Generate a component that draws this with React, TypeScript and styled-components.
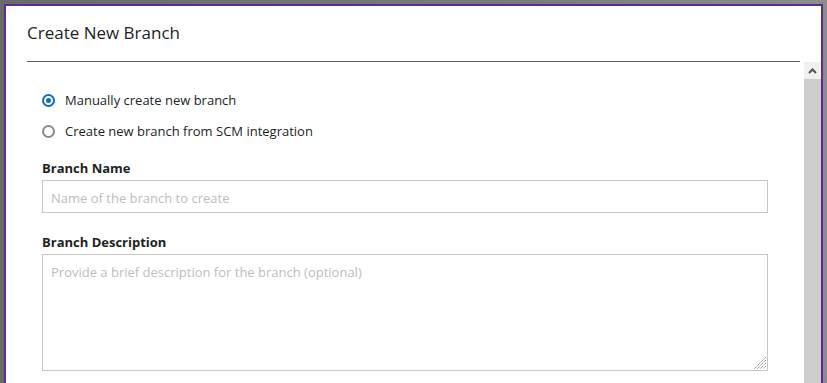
import React from "react";
import styled, { createGlobalStyle } from "styled-components";

const GlobalStyle = createGlobalStyle`
  html, body {
    margin: 0;
    padding: 0;
    height: 100%;
    overflow: hidden;
    background: #6f6f6f;
  }
  body {
    font-family: "Segoe UI", "Open Sans", "Liberation Sans", sans-serif;
  }
  * {
    box-sizing: border-box;
  }
`;

const Backdrop = styled.div`
  height: 383px;
  padding: 4px 4px 0 4px;
  background: linear-gradient(90deg, #6a6a6a 0%, #7a7a7a 60%, #8c8c8c 100%);
`;

const Dialog = styled.div`
  display: flex;
  flex-direction: column;
  height: 100%;
  background: #ffffff;
  border: 2px solid #5c2d91;
  border-bottom: none;
`;

const Header = styled.div`
  display: flex;
  align-items: center;
  height: 56px;
  margin: 0 21px;
  border-bottom: 1px solid #605e5c;
`;

const Title = styled.h1`
  margin: 0 0 2px 0;
  font-size: 17px;
  font-weight: 400;
  color: #201f1e;
`;

const Body = styled.div`
  display: flex;
  flex: 1;
  min-height: 0;
`;

const Content = styled.div`
  flex: 1;
  padding: 28px 36px 0 36px;
`;

const RadioGroup = styled.div`
  display: flex;
  flex-direction: column;
  gap: 11px;
  margin-bottom: 17px;
`;

const RadioRow = styled.label`
  display: flex;
  align-items: center;
  gap: 10px;
  height: 20px;
  font-size: 13px;
  color: #201f1e;
  cursor: pointer;
`;

const Radio = styled.span<{ $checked?: boolean }>`
  position: relative;
  width: 13px;
  height: 13px;
  border-radius: 50%;
  border: 2px solid ${(p) => (p.$checked ? "#0f6cbd" : "#8a8886")};
  flex-shrink: 0;

  &::after {
    content: "";
    display: ${(p) => (p.$checked ? "block" : "none")};
    position: absolute;
    top: 2px;
    left: 2px;
    width: 5px;
    height: 5px;
    border-radius: 50%;
    background: #0f6cbd;
  }
`;

const Field = styled.div`
  display: flex;
  flex-direction: column;
  gap: 2px;
  margin-bottom: 19px;
`;

const FieldLabel = styled.label`
  height: 20px;
  line-height: 20px;
  font-size: 13px;
  font-weight: 700;
  color: #201f1e;
`;

const TextInput = styled.input`
  height: 33px;
  padding: 2px 8px 0 8px;
  border: 1px solid #c8c6c4;
  font-family: inherit;
  font-size: 13px;
  color: #201f1e;
  outline: none;

  &::placeholder {
    color: #bebdbc;
  }
`;

const TextAreaWrap = styled.div`
  position: relative;
  display: flex;
`;

const TextArea = styled.textarea`
  flex: 1;
  height: 117px;
  padding: 8px 8px;
  border: 1px solid #c8c6c4;
  font-family: inherit;
  font-size: 13px;
  color: #201f1e;
  resize: none;
  outline: none;

  &::placeholder {
    color: #bebdbc;
  }
`;

const ResizeGrip = styled.svg`
  position: absolute;
  right: 2px;
  bottom: 2px;
  pointer-events: none;
`;

const Scrollbar = styled.div`
  display: flex;
  flex-direction: column;
  width: 17px;
  background: #f0f0f0;
`;

const ScrollButton = styled.div`
  display: flex;
  align-items: center;
  justify-content: center;
  height: 17px;
  background: #f0f0f0;
`;

const ScrollThumb = styled.div`
  flex: 1;
  background: #cdcdcd;
`;

const App = () => {
  return (
    <>
      <GlobalStyle />
      <Backdrop>
        <Dialog>
          <Header>
            <Title>Create New Branch</Title>
          </Header>
          <Body>
            <Content>
              <RadioGroup>
                <RadioRow>
                  <Radio $checked />
                  Manually create new branch
                </RadioRow>
                <RadioRow>
                  <Radio />
                  Create new branch from SCM integration
                </RadioRow>
              </RadioGroup>
              <Field>
                <FieldLabel>Branch Name</FieldLabel>
                <TextInput placeholder="Name of the branch to create" />
              </Field>
              <Field>
                <FieldLabel>Branch Description</FieldLabel>
                <TextAreaWrap>
                  <TextArea placeholder="Provide a brief description for the branch (optional)" />
                  <ResizeGrip width="13" height="13" viewBox="0 0 13 13">
                    <g stroke="#8a8a8a" strokeWidth="1" strokeDasharray="1.4 0.6">
                      <line x1="13" y1="1" x2="1" y2="13" />
                      <line x1="13" y1="4" x2="4" y2="13" />
                      <line x1="13" y1="7" x2="7" y2="13" />
                      <line x1="13" y1="10" x2="10" y2="13" />
                    </g>
                  </ResizeGrip>
                </TextAreaWrap>
              </Field>
            </Content>
            <Scrollbar>
              <ScrollButton>
                <svg width="9" height="6" viewBox="0 0 9 6">
                  <path d="M1 5 L4.5 1.5 L8 5" fill="none" stroke="#505050" strokeWidth="2" />
                </svg>
              </ScrollButton>
              <ScrollThumb />
            </Scrollbar>
          </Body>
        </Dialog>
      </Backdrop>
    </>
  );
};

export default App;
